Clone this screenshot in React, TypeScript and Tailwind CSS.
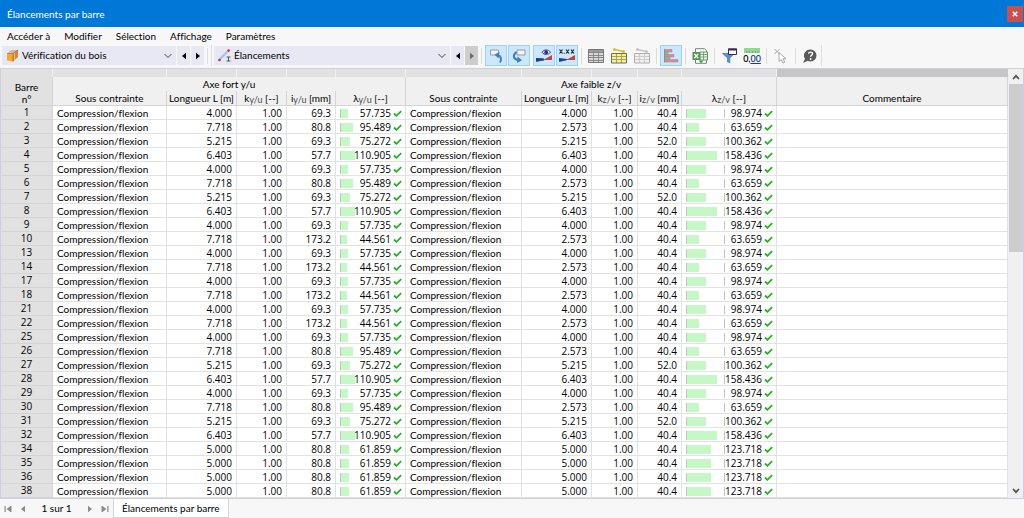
import React, { useState } from 'react';

interface Section {
  ly: string;
  iy: string;
  lambdaY: string;
  lz: string;
  iz: string;
  lambdaZ: string;
}

const SECTIONS: Record<string, Section> = {
  A: { ly: '4.000', iy: '69.3', lambdaY: '57.735', lz: '4.000', iz: '40.4', lambdaZ: '98.974' },
  B: { ly: '7.718', iy: '80.8', lambdaY: '95.489', lz: '2.573', iz: '40.4', lambdaZ: '63.659' },
  C: { ly: '5.215', iy: '69.3', lambdaY: '75.272', lz: '5.215', iz: '52.0', lambdaZ: '100.362' },
  D: { ly: '6.403', iy: '57.7', lambdaY: '110.905', lz: '6.403', iz: '40.4', lambdaZ: '158.436' },
  E: { ly: '5.000', iy: '80.8', lambdaY: '61.859', lz: '5.000', iz: '40.4', lambdaZ: '123.718' },
  F: { ly: '7.718', iy: '173.2', lambdaY: '44.561', lz: '2.573', iz: '40.4', lambdaZ: '63.659' },
};

const ROWS: [number, string][] = [
  [1, 'A'], [2, 'B'], [3, 'C'], [4, 'D'], [5, 'A'], [6, 'B'], [7, 'C'], [8, 'D'],
  [9, 'A'], [10, 'F'], [13, 'A'], [14, 'F'], [17, 'A'], [18, 'F'], [21, 'A'], [22, 'F'],
  [25, 'A'], [26, 'B'], [27, 'C'], [28, 'D'], [29, 'A'], [30, 'B'], [31, 'C'], [32, 'D'],
  [34, 'E'], [35, 'E'], [36, 'E'], [38, 'E'],
];

const MENU = ['Accéder à', 'Modifier', 'Sélection', 'Affichage', 'Paramètres'];

const App: React.FC = () => {
  return (
    <div className="min-h-screen flex flex-col bg-[#f7f7f7] text-[10px] leading-[13px] text-black font-['Lato','Open_Sans',sans-serif] [font-variant-ligatures:none]">
      <header className="h-[27px] bg-[#0078d7] flex items-center justify-between pl-[7px] pr-px pt-px">
        <h1 className="text-white">Élancements par barre</h1>
        <button aria-label="Fermer" className="w-4 h-4 bg-[#c75050] text-white flex items-center justify-center">
          <svg viewBox="0 0 8 8" className="w-[6px] h-[6px]" stroke="currentColor" strokeWidth="2">
            <path d="M1 1l6 6M7 1L1 7" />
          </svg>
        </button>
      </header>

      <nav className="h-[18px] flex items-center gap-[14px] pl-[7px]">
        {MENU.map(item => (
          <button key={item}>{item}</button>
        ))}
      </nav>

      <Toolbar />

      <main className="flex border border-[#cfcfdc]">
        <ResultTable />
        <Scrollbar />
      </main>

      <footer className="h-[19px] flex items-stretch">
        <div className="w-[113px] flex items-center justify-between px-1 text-[#8a8a8a]">
          <button aria-label="Première page"><FirstIcon /></button>
          <button aria-label="Page précédente"><LeftIcon /></button>
          <span className="px-2 text-black">1 sur 1</span>
          <button aria-label="Page suivante"><RightIcon /></button>
          <button aria-label="Dernière page"><LastIcon /></button>
        </div>
        <button className="bg-white border-x border-b border-[#d4d4dc] px-2">Élancements par barre</button>
      </footer>
    </div>
  );
};

const Toolbar = () => (
  <div className="h-[23px] flex items-center pb-[2px] pl-[2px]">
    <Picker label="Module" options={['Vérification du bois']} icon={<TimberIcon />} className="w-[174px]" />
    <StepButton label="Module précédent"><LeftIcon /></StepButton>
    <StepButton label="Module suivant"><RightIcon /></StepButton>
    <Divider />
    <div className="w-px h-[21px] mr-[2px] bg-[#dedede]" />
    <Picker label="Tableau" options={['Élancements']} icon={<SlendernessIcon />} className="w-[236px]" />
    <StepButton label="Tableau précédent"><LeftIcon /></StepButton>
    <StepButton label="Tableau suivant" disabled><RightIcon /></StepButton>
    <Divider />
    <div className="flex gap-px">
      <ToolButton label="Sélection vers modèle" active><SyncUpIcon /></ToolButton>
      <ToolButton label="Modèle vers sélection" active><SyncDownIcon /></ToolButton>
    </div>
    <div className="flex gap-px ml-[3px]">
      <ToolButton label="Afficher les résultats" active><EyeIcon /></ToolButton>
      <ToolButton label="Afficher les valeurs" active><ValuesIcon /></ToolButton>
    </div>
    <Divider />
    <div className="flex gap-px">
      <ToolButton label="Tableau complet"><GridIcon /></ToolButton>
      <ToolButton label="Lignes sélectionnées"><LinkedGridIcon line="#f0b81c" fill="#fbf08a" frame="#6b6b6b" inner="#a5a16a" /></ToolButton>
      <ToolButton label="Lignes filtrées"><LinkedGridIcon line="#c4c4c4" fill="#efefef" frame="#b0b0b0" inner="#cccccc" /></ToolButton>
    </div>
    <Divider />
    <ToolButton label="Barres relatives" active><ChartIcon /></ToolButton>
    <Divider />
    <ToolButton label="Exporter vers Excel"><ExcelIcon /></ToolButton>
    <Divider />
    <div className="flex gap-px">
      <ToolButton label="Filtre"><FilterIcon /></ToolButton>
      <ToolButton label="Décimales"><DecimalIcon /></ToolButton>
    </div>
    <Divider />
    <ToolButton label="Désélectionner"><CursorIcon /></ToolButton>
    <Divider />
    <ToolButton label="Aide"><HelpIcon /></ToolButton>
    <div className="w-px h-[21px] bg-[#dedede]" />
  </div>
);

const Divider = () => <div className="w-px h-4 mx-[3px] bg-[#dcdcdc]" />;

interface PickerProps {
  label: string;
  options: string[];
  icon: React.ReactNode;
  className: string;
}

const Picker: React.FC<PickerProps> = ({ label, options, icon, className }) => {
  const [value, setValue] = useState(options[0]);
  return (
    <label className={`h-[19px] bg-[#e8e8f4] flex items-center gap-[3px] px-1 shrink-0 ${className}`}>
      {icon}
      <select
        aria-label={label}
        value={value}
        onChange={e => setValue(e.target.value)}
        className="appearance-none bg-transparent flex-1 outline-none"
      >
        {options.map(o => <option key={o}>{o}</option>)}
      </select>
      <svg viewBox="0 0 8 8" className="w-2 h-2" fill="none" stroke="#444" strokeWidth="1">
        <path d="M0.5 2l3.5 3.5L7.5 2" />
      </svg>
    </label>
  );
};

const StepButton: React.FC<any> = ({ label, disabled, children }) => (
  <button
    aria-label={label}
    disabled={disabled}
    className={`w-[13px] h-[19px] ml-px flex items-center justify-center shrink-0 ${disabled ? 'bg-[#cdcdcd] text-[#6c6c6c]' : 'bg-[#e8e8f4] text-black'}`}
  >
    {children}
  </button>
);

const ToolButton: React.FC<any> = ({ label, active, children }) => (
  <button
    aria-label={label}
    className={`w-[22px] h-[21px] flex items-center justify-center shrink-0 border ${active ? 'bg-[#cce8ff] border-[#99d1ff]' : 'border-transparent'}`}
  >
    {children}
  </button>
);

const TOP = 'h-2 p-0 bg-[#e1e1e1] border-r border-[#f2f2f2]';
const HEAD = 'p-0 font-normal whitespace-nowrap text-center border-r border-b border-[#d4d4d4]';

const ResultTable = () => (
  <table className="w-full min-w-0 flex-1 table-fixed border-separate border-spacing-0 bg-white">
    <colgroup>
      <col className="w-[52px]" />
      <col className="w-[114px]" />
      <col className="w-[70px]" />
      <col className="w-[50px]" />
      <col className="w-[49px]" />
      <col className="w-[70px]" />
      <col className="w-[116px]" />
      <col className="w-[70px]" />
      <col className="w-[46px]" />
      <col className="w-[44px]" />
      <col className="w-[95px]" />
      <col />
    </colgroup>
    <thead className="bg-[#f0f0f0]">
      <tr>
        {Array.from({ length: 11 }, (_, i) => <td key={i} className={TOP} />)}
        <td className="h-2 p-0 bg-[#c6c6c6]" />
      </tr>
      <tr>
        <th rowSpan={2} className="p-0 pt-1 font-normal leading-[12px] bg-[#e1e1e1] border-r border-b border-[#d4d4d4]">Barre<br />n°</th>
        <th colSpan={5} className="h-[14px] p-0 font-normal border-r border-[#d4d4d4]">Axe fort y/u</th>
        <th colSpan={5} className="h-[14px] p-0 font-normal border-r border-[#d4d4d4]">Axe faible z/v</th>
        <th className="p-0 border-r border-[#d4d4d4]" />
      </tr>
      <tr className="h-[15px]">
        <AxisHeads axis="y/u" />
        <AxisHeads axis="z/v" />
        <th className={HEAD}>Commentaire</th>
      </tr>
    </thead>
    <tbody>
      {ROWS.map(([no, key]) => {
        const s = SECTIONS[key];
        return (
          <tr key={no}>
            <th className="h-[14px] p-0 font-normal font-['Open_Sans',sans-serif] bg-[#e1e1e1] border-r border-b border-[#d4d4d4]">{no}</th>
            <LabelCell />
            <NumCell value={s.ly} />
            <NumCell value="1.00" />
            <NumCell value={s.iy} />
            <RatioCell value={s.lambdaY} track={25} />
            <LabelCell />
            <NumCell value={s.lz} />
            <NumCell value="1.00" />
            <NumCell value={s.iz} />
            <RatioCell value={s.lambdaZ} track={38} showLimit />
            <td className="p-0 border-r border-b border-[#e2e2e2]" />
          </tr>
        );
      })}
    </tbody>
  </table>
);

const AxisHeads = ({ axis }: { axis: string }) => (
  <>
    <th className={HEAD}>Sous contrainte</th>
    <th className={`${HEAD} overflow-hidden`}>Longueur L [m]</th>
    <th className={HEAD}>k<Sub>{axis}</Sub> [--]</th>
    <th className={HEAD}>i<Sub>{axis}</Sub> [mm]</th>
    <th className={HEAD}>λ<Sub>{axis}</Sub> [--]</th>
  </>
);

const Sub: React.FC<any> = ({ children }) => (
  <sub className="text-[9px] leading-none bottom-[-1px] text-[#4a4a4a]">{children}</sub>
);

const LabelCell = () => (
  <td className="p-0 pl-1 pt-px leading-[12px] border-r border-b border-[#e2e2e2] whitespace-nowrap">Compression/flexion</td>
);

const NumCell = ({ value }: { value: string }) => (
  <td className="p-0 pr-1 pt-px leading-[12px] text-right font-['Open_Sans',sans-serif] border-r border-b border-[#e2e2e2]">{value}</td>
);

// slenderness bar, the track stands for the limit of 200
const RatioCell = ({ value, track, showLimit }: { value: string; track: number; showLimit?: boolean }) => (
  <td className="p-0 pt-px leading-[12px] font-['Open_Sans',sans-serif] border-r border-b border-[#e2e2e2]">
    <div className="flex items-center pl-1 pr-[3px]">
      <div
        className={`h-[9px] flex border-[#c4c4c4] border-l ${showLimit ? 'border-r shrink-0' : 'min-w-3 shrink'}`}
        style={{ width: track + 1 }}
      >
        <div className="bg-[#c6f7c6] shrink-0" style={{ width: Math.round((Number(value) / 200) * track) }} />
      </div>
      <span className="flex-1 flex justify-end">{value}</span>
      <svg viewBox="0 0 9 7" className="w-[9px] h-[7px] ml-[2px] shrink-0" fill="none" stroke="#22b222" strokeWidth="1.8">
        <path d="M1 3.5l2.4 2.3L8.2 1.2" />
      </svg>
    </div>
  </td>
);

const Scrollbar = () => (
  <div className="w-[15px] shrink-0 flex flex-col bg-[#f0f0f0]">
    <button aria-label="Défiler vers le haut" className="h-[15px] flex items-center justify-center">
      <svg viewBox="0 0 8 6" className="w-2 h-[6px]" fill="none" stroke="#505050" strokeWidth="1.7">
        <path d="M1 5l3-3.2L7 5" />
      </svg>
    </button>
    <div className="flex-1 pl-px">
      <div className="h-[42%] bg-[#cdcdcd]" />
    </div>
    <button aria-label="Défiler vers le bas" className="h-[15px] flex items-center justify-center">
      <svg viewBox="0 0 8 6" className="w-2 h-[6px]" fill="none" stroke="#505050" strokeWidth="1.7">
        <path d="M1 1l3 3.2L7 1" />
      </svg>
    </button>
  </div>
);

const LeftIcon = () => (
  <svg viewBox="0 0 6 8" className="w-[6px] h-2" fill="currentColor"><path d="M5 0.8v6.4L1 4z" /></svg>
);
const RightIcon = () => (
  <svg viewBox="0 0 6 8" className="w-[6px] h-2" fill="currentColor"><path d="M1 0.8v6.4L5 4z" /></svg>
);
const FirstIcon = () => (
  <svg viewBox="0 0 8 8" className="w-2 h-2" fill="currentColor"><path d="M0.5 1h1.2v6H0.5zM6.5 1v6L2.6 4zM6.5 1h1v6h-1z" /></svg>
);
const LastIcon = () => (
  <svg viewBox="0 0 8 8" className="w-2 h-2" fill="currentColor"><path d="M7.5 1H6.3v6h1.2zM1.5 1v6l3.9-3zM0.5 1h1v6h-1z" /></svg>
);
const TimberIcon = () => (
  <svg viewBox="0 0 13 13" className="w-[13px] h-[13px]">
    <path d="M1 4.5L6 1h6L7 4.500z" fill="#b9a67c" />
    <path d="M7 4.500L12 1v7L7 12.500z" fill="#d08a2c" />
    <path d="M1 4.500h6v8L1 11.500z" fill="#fba62c" />
    <path d="M3 4.500L8 1M5 4.500L10 1M8.500 3.500v7.500" stroke="#e9dcc0" strokeWidth="0.700" fill="none" />
    <path d="M1 4.500h6v8M7 4.500L12 1" stroke="#8a6a38" strokeWidth="0.600" fill="none" />
  </svg>
);
const SlendernessIcon = () => (
  <svg viewBox="0 0 13 13" className="w-[13px] h-[13px]">
    <path d="M1.500 10.500L10 2" stroke="#a9c3e4" strokeWidth="2.400" />
    <circle cx="1.500" cy="11" r="1.300" fill="#d02a3c" />
    <circle cx="10.600" cy="1.600" r="1.300" fill="#d02a3c" />
    <path d="M8.500 8h4M8.500 12h4M10.500 8v4" stroke="#555" strokeWidth="1" />
  </svg>
);
const SyncUpIcon = () => (
  <svg viewBox="0 0 16 16" className="w-4 h-4" fill="none">
    <path d="M2.500 2h8v5h-8z" fill="#f3f3f3" stroke="#9a9a9a" />
    <path d="M12 14.500c2-3.500 1-6.500-2.500-7.500" stroke="#3b7fbd" strokeWidth="2" />
    <path d="M11.500 4L6.500 6.500l4 4z" fill="#3b7fbd" />
  </svg>
);
const SyncDownIcon = () => (
  <svg viewBox="0 0 16 16" className="w-4 h-4" fill="none">
    <path d="M6 2h8v5H6z" fill="#f3f3f3" stroke="#9a9a9a" />
    <path d="M5.500 4c-4 3-3.500 7 1.500 8" stroke="#3b7fbd" strokeWidth="2" />
    <path d="M6.500 8.500l4.500 3.700-5 2.800z" fill="#3b7fbd" />
  </svg>
);
const EyeIcon = () => (
  <svg viewBox="0 0 18 16" className="w-[18px] h-4" fill="none">
    <path d="M7 4.200c2-3 6.500-3 8.500 0c-2 3-6.500 3-8.500 0z" fill="#fff" stroke="#3a3a78" />
    <circle cx="11.200" cy="4.200" r="1.900" fill="#2c2c78" />
    <path d="M1 12.500V10l8 0.500V12.500z" fill="#173f9c" />
    <path d="M1 10v3.500h2l6-1.500V11z" fill="#173f9c" />
    <path d="M9 11.500L17 7v4.500z" fill="#df3a28" />
    <path d="M1 13.500L9 11.500h8" stroke="#4b4b6a" strokeWidth="0.700" />
  </svg>
);
const ValuesIcon = () => (
  <svg viewBox="0 0 18 16" className="w-[18px] h-4" fill="none">
    <path d="M1.500 1.500l3 4M4.500 1.500l-3 4M8 1.500l3 4M11 1.500l-3 4M13 1.500l3 4M16 1.500l-3 4" stroke="#222" strokeWidth="1.100" />
    <path d="M5.700 4.700h1v1h-1z" fill="#222" />
    <path d="M1 10v3.500h2l6-1.500V11z" fill="#173f9c" />
    <path d="M9 11.500L17 7v4.500z" fill="#df3a28" />
    <path d="M1 13.500L9 11.500h8" stroke="#4b4b6a" strokeWidth="0.700" />
  </svg>
);
const GridIcon = () => (
  <svg viewBox="0 0 16 16" className="w-4 h-4" fill="none">
    <path d="M0.500 1.500h15v13H0.500z" fill="#d9d9d9" stroke="#777" />
    <path d="M1 2h14v2H1z" fill="#999" />
    <path d="M1 4.500h14M1 7.500h14M1 9.500h14M1 12.500h14M5.500 4v10M10.500 4v10" stroke="#888" />
  </svg>
);
const LinkedGridIcon = ({ line, fill, frame, inner }: Record<string, string>) => (
  <svg viewBox="0 0 16 16" className="w-4 h-4" fill="none">
    <path d="M0.500 5.500h15v9.500H0.500z" fill={fill} />
    <path d="M1 8.500h14M1 11.500h14M5.500 6v9M10.500 6v9" stroke={inner} />
    <path d="M0.500 5.500h15v9.500H0.500z" stroke={frame} />
    <path d="M3.500 1.500L12.500 3.500" stroke={line} strokeWidth="1.500" />
    <circle cx="3.500" cy="1.500" r="1.500" fill={line} />
    <circle cx="12.500" cy="3.500" r="1.500" fill={line} />
  </svg>
);
const ChartIcon = () => (
  <svg viewBox="0 0 16 16" className="w-4 h-4">
    <path d="M1.500 1.500H9V4H1.500zM1.500 6.500H11V9H1.500zM1.500 11.500H15V14H1.500z" fill="#d98e92" stroke="#a98a90" strokeWidth="0.600" />
    <path d="M1.500 4H5v2.500H1.500zM1.500 9H7v2.500H1.500z" fill="#8fb99a" stroke="#7f9c8c" strokeWidth="0.600" />
    <path d="M1.500 1v13.500" stroke="#888" strokeWidth="0.800" />
  </svg>
);
const ExcelIcon = () => (
  <svg viewBox="0 0 16 16" className="w-4 h-4" fill="none">
    <path d="M3.500 0.700h9l2 2v12.600h-11z" fill="#fff" stroke="#6f8b6f" />
    <path d="M8 4h7.500v8H8z" fill="#eef6ee" stroke="#5f955f" />
    <path d="M0.500 4H8v8H0.500z" fill="#4f8f52" />
    <path d="M8 6.500h7M8 9h7M11.500 4v8" stroke="#7aa57c" />
    <path d="M2.300 5.700l4 4.600M6.300 5.700l-4 4.600" stroke="#fff" strokeWidth="1.300" />
    <path d="M6.500 12.500h5L9 15.300z" fill="#4c9a50" />
  </svg>
);
const FilterIcon = () => (
  <svg viewBox="0 0 16 16" className="w-4 h-4" fill="none">
    <path d="M0.500 5h14L9.300 10v5.500L6 14v-4z" fill="#5b8ecb" />
    <path d="M7.500 1h8v5.500h-8z" fill="#fff" stroke="#2f2f52" />
    <path d="M7 0.500h9v2H7z" fill="#2f2f52" />
  </svg>
);
const DecimalIcon = () => (
  <span className="flex flex-col items-center text-[9px] leading-[11px] font-semibold">
    <svg viewBox="0 0 16 5" className="w-4 h-[5px]">
      <path d="M0 0h16v5H0z" fill="#8fd88f" />
      <path d="M2.500 3v2M5.500 3v2M8.500 3v2M11.500 3v2M14 3v2" stroke="#5fa85f" strokeWidth="0.800" />
    </svg>
    <span>0,<span className="text-[#173f8c] underline">00</span></span>
  </span>
);
const CursorIcon = () => (
  <svg viewBox="0 0 16 16" className="w-4 h-4" fill="none" stroke="#a8a8a8">
    <path d="M6 4.500v9l2.200-2 1.800 3.700 1.700-0.900L10 10.800h3z" fill="#fff" />
    <path d="M1.500 1l5 5M6.500 1l-5 5" />
  </svg>
);
const HelpIcon = () => (
  <svg viewBox="0 0 16 16" className="w-4 h-4" fill="none">
    <path d="M8.500 1.500a6 6 0 110 12c-1 0-2-.2-2.800-.7L1 15l2-4.200A6 6 0 018.500 1.500z" fill="#5a5a5a" />
    <path d="M6.600 5.800c.1-2.300 4-2.200 3.900 0c0 1.300-1.900 1.500-1.900 3" stroke="#fff" strokeWidth="1.400" />
    <circle cx="8.600" cy="11" r="0.900" fill="#fff" />
  </svg>
);

export default App;
